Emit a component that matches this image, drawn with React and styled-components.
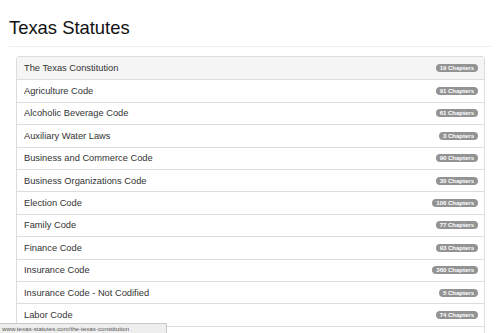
import React from 'react'
import styled, { createGlobalStyle } from 'styled-components'

const codes = [
  ['The Texas Constitution', 19],
  ['Agriculture Code', 91],
  ['Alcoholic Beverage Code', 61],
  ['Auxiliary Water Laws', 3],
  ['Business and Commerce Code', 90],
  ['Business Organizations Code', 30],
  ['Election Code', 106],
  ['Family Code', 77],
  ['Finance Code', 93],
  ['Insurance Code', 360],
  ['Insurance Code - Not Codified', 5],
  ['Labor Code', 74],
  ['Local Government Code', 397],
]

const App = () => {
  return (
    <Page>
      <GlobalStyle />

      <Title>Texas Statutes</Title>
      <Rule />

      <List>
        {codes.map(([name, count], i) => (
          <Item key={name} $active={i === 0}>
            <Name>{name}</Name>
            <Badge>{count} Chapters</Badge>
          </Item>
        ))}
      </List>

      <StatusBar>www.texas-statutes.com/the-texas-constitution</StatusBar>
    </Page>
  )
}

export default App


const GlobalStyle = createGlobalStyle`
  html, body {
    margin: 0;
    padding: 0;
    overflow: hidden;
    background: #fff;
  }
`

const Page = styled.div`
  font-family: "Liberation Sans", Arial, sans-serif;
  color: #333;
  padding: 17px 8px 0 9px;
`

const Title = styled.h1`
  margin: 0;
  font-size: 18.4px;
  font-weight: normal;
  line-height: 22px;
  color: #111;
`

const Rule = styled.div`
  height: 1px;
  width: 483px;
  margin: 7px 0 9px;
  background: #eeeeee;
`

const List = styled.div`
  margin-left: 7px;
  width: 467px;
  border: 1px solid #dddddd;
  border-radius: 3px;
`

const Item = styled.div`
  height: 22.4px;
  box-sizing: border-box;
  display: flex;
  align-items: center;
  justify-content: space-between;
  padding: 0 6px 0 7px;
  background: ${p => (p.$active ? '#f5f5f5' : '#fff')};

  & + & {
    border-top: 1px solid #dddddd;
  }
`

const Name = styled.span`
  font-size: 9.3px;
  color: #333;
`

const Badge = styled.span`
  height: 8px;
  line-height: 8px;
  padding: 0 4px;
  border-radius: 4px;
  background: #939393;
  color: #fff;
  font-size: 6px;
  font-weight: bold;
`

const StatusBar = styled.div`
  position: fixed;
  left: 0;
  bottom: 0;
  width: 164px;
  height: 9px;
  line-height: 9px;
  padding-left: 2px;
  background: #eeeeee;
  border: 1px solid #c8c8c8;
  border-left: none;
  border-bottom: none;
  border-top-right-radius: 2px;
  font-size: 6.2px;
  color: #555;
  overflow: hidden;
  white-space: nowrap;
`
